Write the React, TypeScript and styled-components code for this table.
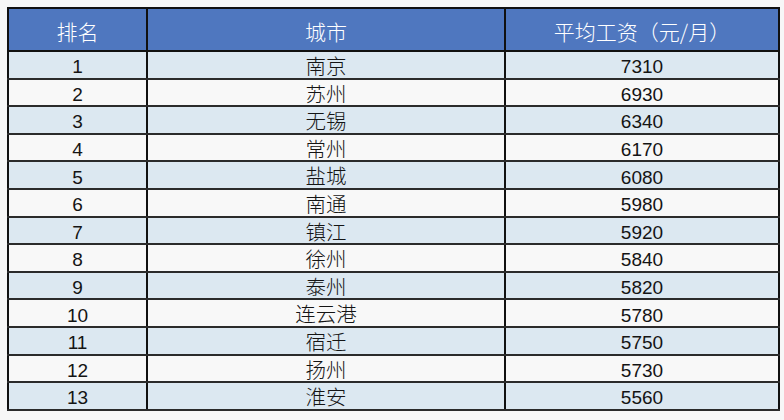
import React from 'react';
import styled, { createGlobalStyle } from 'styled-components';

const GlobalStyle = createGlobalStyle`
  html, body {
    margin: 0;
    padding: 0;
    background: #f7f7f7;
  }
  body {
    font-family: "Liberation Sans", "Noto Sans CJK SC", sans-serif;
  }
`;

const Page = styled.div`
  width: 784px;
  height: 420px;
  padding: 7px 0 0 7px;
  box-sizing: border-box;
`;

const Table = styled.table`
  width: 771px;
  border-collapse: collapse;
  border: 2px solid #111;
  table-layout: fixed;
`;

const HeadCell = styled.th`
  height: 43px;
  padding: 4px 0 0;
  background: #4f77bf;
  color: #fff;
  font-family: "Noto Sans CJK SC", sans-serif;
  font-weight: 300;
  font-size: 21px;
  line-height: 1;
  text-align: center;
  border: 2px solid #111;
  box-sizing: border-box;
`;

const Cell = styled.td<{ $striped: boolean; $cjk?: boolean }>`
  height: 27.6px;
  padding: ${props => (props.$cjk ? '1px' : '4px')} 0 0;
  background: ${props => (props.$striped ? '#dce8f1' : '#f8f8f8')};
  color: #141414;
  font-family: ${props =>
    props.$cjk ? '"Noto Sans CJK SC", sans-serif' : '"Liberation Sans", sans-serif'};
  font-weight: ${props => (props.$cjk ? 300 : 400)};
  font-size: ${props => (props.$cjk ? '20.5px' : '19px')};
  line-height: 1;
  text-align: center;
  border-left: 2px solid #111;
  border-right: 2px solid #111;
  border-bottom: 2px solid #2b2b2b;
  box-sizing: border-box;
`;

const rows = [
  ['1', '南京', '7310'],
  ['2', '苏州', '6930'],
  ['3', '无锡', '6340'],
  ['4', '常州', '6170'],
  ['5', '盐城', '6080'],
  ['6', '南通', '5980'],
  ['7', '镇江', '5920'],
  ['8', '徐州', '5840'],
  ['9', '泰州', '5820'],
  ['10', '连云港', '5780'],
  ['11', '宿迁', '5750'],
  ['12', '扬州', '5730'],
  ['13', '淮安', '5560']
];

const App = () => (
  <>
    <GlobalStyle />
    <Page>
      <Table>
        <colgroup>
          <col style={{ width: 139 }} />
          <col style={{ width: 358 }} />
          <col style={{ width: 274 }} />
        </colgroup>
        <thead>
          <tr>
            <HeadCell>排名</HeadCell>
            <HeadCell>城市</HeadCell>
            <HeadCell>平均工资（元/月）</HeadCell>
          </tr>
        </thead>
        <tbody>
          {rows.map(([rank, city, pay], i) => (
            <tr key={rank}>
              <Cell $striped={i % 2 === 0}>{rank}</Cell>
              <Cell $striped={i % 2 === 0} $cjk>
                {city}
              </Cell>
              <Cell $striped={i % 2 === 0}>{pay}</Cell>
            </tr>
          ))}
        </tbody>
      </Table>
    </Page>
  </>
);

export default App;
